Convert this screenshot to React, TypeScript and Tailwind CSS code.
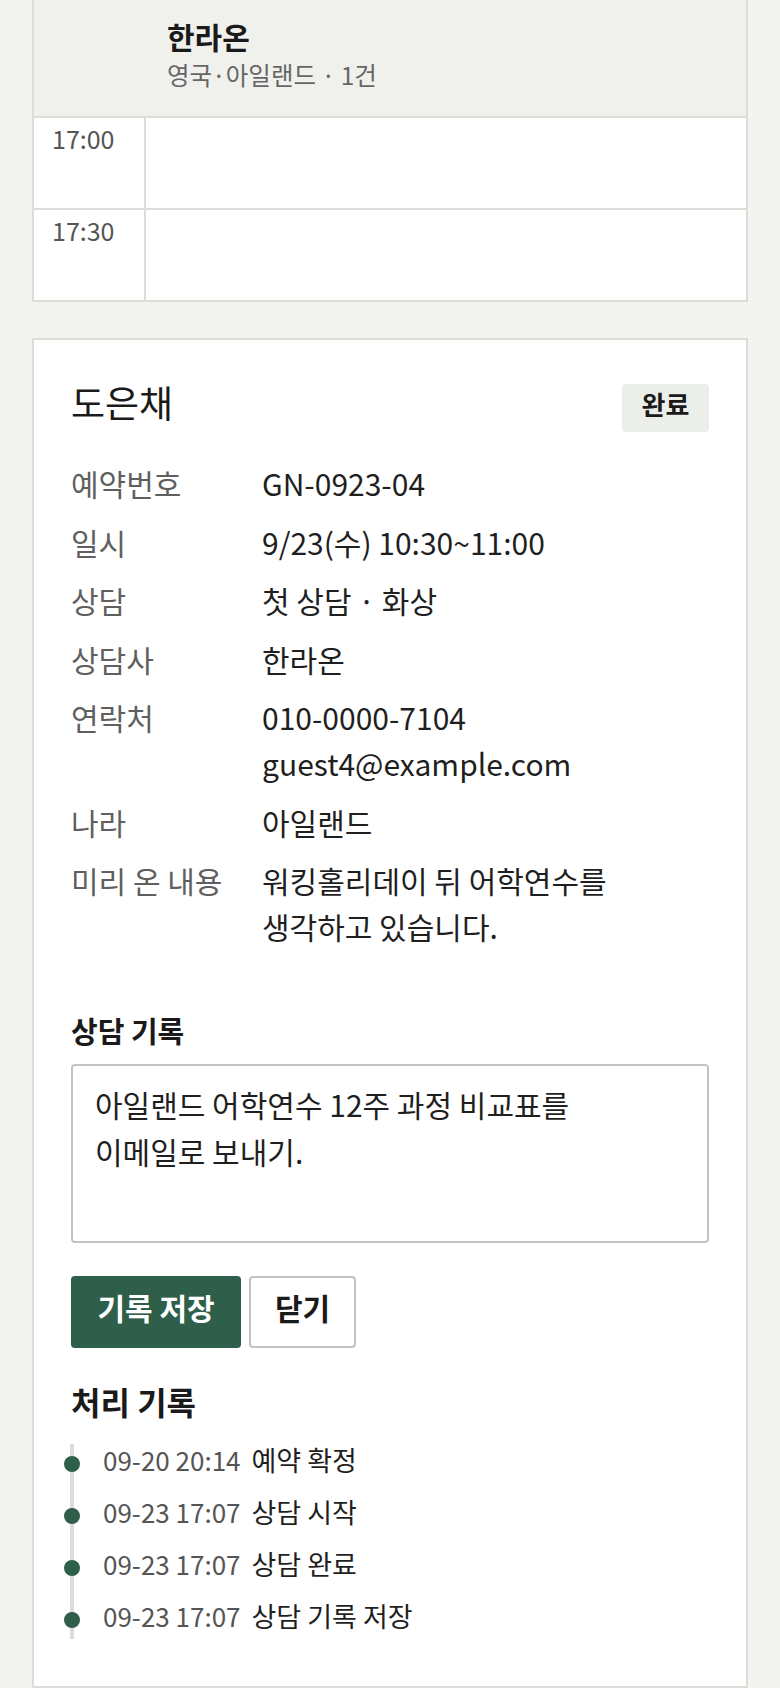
const slots = ['17:00', '17:30']

const info: { label: string; value: React.ReactNode }[] = [
  { label: '예약번호', value: 'GN-0923-04' },
  { label: '일시', value: '9/23(수) 10:30~11:00' },
  { label: '상담', value: '첫 상담 · 화상' },
  { label: '상담사', value: '한라온' },
  {
    label: '연락처',
    value: (
      <>
        010-0000-7104
        <br />
        guest4@example.com
      </>
    ),
  },
  { label: '나라', value: '아일랜드' },
  {
    label: '미리 온 내용',
    value: (
      <>
        워킹홀리데이 뒤 어학연수를
        <br />
        생각하고 있습니다.
      </>
    ),
  },
]

const history = [
  { at: '09-20 20:14', text: '예약 확정' },
  { at: '09-23 17:07', text: '상담 시작' },
  { at: '09-23 17:07', text: '상담 완료' },
  { at: '09-23 17:07', text: '상담 기록 저장' },
]

function ScheduleColumn() {
  return (
    <section className="border-2 border-t-0 border-[#dcdcd8] bg-white">
      {/* counsellor header */}
      <div className="border-b-2 border-[#dcdcd8] bg-[#f0f1ed] pl-[133px] pt-[16px] pb-[22px]">
        <h2 className="text-[30px] font-bold leading-[40px] text-[#1a1a1a]">한라온</h2>
        <p className="text-[24.5px] leading-[38px] text-[#666666]">영국·아일랜드 · 1건</p>
      </div>

      {slots.map((t, i) => (
        <div
          key={t}
          className={
            i === 0
              ? 'grid h-[90px] grid-cols-[112px_1fr]'
              : 'grid h-[92px] grid-cols-[112px_1fr] border-t-2 border-[#dcdcd8]'
          }
        >
          <div className="border-r-2 border-[#dcdcd8] pl-[18px] pt-[6px] text-[25px] leading-[28px] text-[#555555]">
            {t}
          </div>
          <div />
        </div>
      ))}
    </section>
  )
}

function BookingDetail() {
  return (
    <section className="mt-[36px] border-2 border-[#dcdcd8] bg-white px-[37px] pt-[44px] pb-[47px]">
      {/* name + status */}
      <div className="flex items-start justify-between">
        <h1 className="text-[37px] font-normal leading-[36px] text-[#1a1a1a]">도은채</h1>
        <span className="h-[48px] w-[87px] rounded-[4px] bg-[#eceeea] pt-[6px] text-center text-[26px] font-bold leading-[28px] text-[#1a1a1a]">
          완료
        </span>
      </div>

      <dl className="mt-[28px] grid grid-cols-[191px_1fr] gap-y-[12.5px] text-[30px] leading-[46px]">
        {info.map((row) => (
          <div key={row.label} className="contents">
            <dt className="text-[#5f5f5f]">{row.label}</dt>
            <dd className="text-[#1f1f1f]">{row.value}</dd>
          </div>
        ))}
      </dl>

      {/* memo */}
      <h3 className="mt-[63px] text-[29px] font-bold leading-[36px] text-[#1a1a1a]">상담 기록</h3>
      <textarea
        className="mt-[16px] block h-[179px] w-full resize-none rounded-[4px] border-2 border-[#c2c2c2] px-[22px] py-[15px] text-[30px] leading-[47px] text-[#1f1f1f] outline-none"
        defaultValue={'아일랜드 어학연수 12주 과정 비교표를\n이메일로 보내기.'}
      />

      <div className="mt-[33px] flex gap-[8px]">
        <button className="h-[72px] w-[170px] rounded-[4px] bg-[#2f5f4b] pb-[10px] text-[30px] font-bold leading-[36px] text-white">
          기록 저장
        </button>
        <button className="h-[72px] w-[107px] rounded-[4px] border-2 border-[#c2c2c2] bg-white pb-[10px] text-[30px] font-bold leading-[36px] text-[#1a1a1a]">
          닫기
        </button>
      </div>

      {/* log */}
      <h3 className="mt-[33px] text-[32px] font-bold leading-[40px] text-[#1a1a1a]">처리 기록</h3>
      <ul className="mt-[23px] ml-[-1px] flex flex-col gap-[20px] border-l-4 border-[#dcdcdc] pb-[7px]">
        {history.map((h, i) => (
          <li key={i} className="relative flex items-baseline pl-[29px] text-[27px] leading-[32px]">
            <span className="absolute left-[-10px] top-[12px] h-[16px] w-[16px] rounded-full bg-[#2f5f4b]" />
            <span className="mr-[11px] text-[26px] text-[#555555]">{h.at}</span>
            <span className="text-[#1f1f1f]">{h.text}</span>
          </li>
        ))}
      </ul>
    </section>
  )
}

export default function App() {
  return (
    <div className="min-h-screen bg-[#f3f3ef] px-[32px] font-['Noto_Sans_CJK_KR',sans-serif]">
      <ScheduleColumn />
      <BookingDetail />
    </div>
  )
}
